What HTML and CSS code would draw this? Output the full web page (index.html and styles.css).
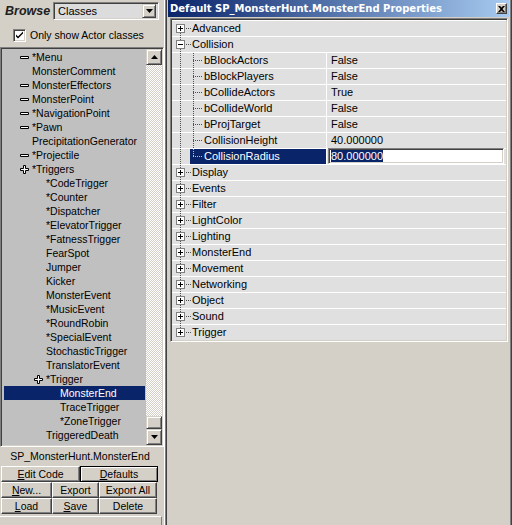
FILE: index.html
```html
<!DOCTYPE html>
<html>
<head>
<meta charset="utf-8">
<title>Actor Class Browser</title>
<link rel="stylesheet" href="styles.css">
</head>
<body>
<div class="app">
  <aside class="browser">
    <div class="browse-bar">
      <span class="browse-label">Browse</span>
      <div class="combo">
        <span class="combo-text">Classes</span>
        <span class="combo-btn"><svg width="7" height="4" viewBox="0 0 7 4"><path d="M0 0h7L3.5 4z" fill="#000"/></svg></span>
      </div>
    </div>
    <label class="check-row">
      <span class="checkbox"><svg width="9" height="9" viewBox="0 0 9 9"><path d="M1 3.5l2 2 5-5v2l-5 5-2-2z" fill="#000"/></svg></span>
      <span class="check-label">Only show Actor classes</span>
    </label>
    <div class="class-list">
      <ul class="tree">
        <li class="l0"><span class="tw minus"></span>*Menu</li>
        <li class="l0"><span class="tw"></span>MonsterComment</li>
        <li class="l0"><span class="tw minus"></span>MonsterEffectors</li>
        <li class="l0"><span class="tw minus"></span>MonsterPoint</li>
        <li class="l0"><span class="tw minus"></span>*NavigationPoint</li>
        <li class="l0"><span class="tw minus"></span>*Pawn</li>
        <li class="l0"><span class="tw"></span>PrecipitationGenerator</li>
        <li class="l0"><span class="tw minus"></span>*Projectile</li>
        <li class="l0"><span class="tw plus"></span>*Triggers</li>
        <li class="l1"><span class="tw"></span>*CodeTrigger</li>
        <li class="l1"><span class="tw"></span>*Counter</li>
        <li class="l1"><span class="tw"></span>*Dispatcher</li>
        <li class="l1"><span class="tw"></span>*ElevatorTrigger</li>
        <li class="l1"><span class="tw"></span>*FatnessTrigger</li>
        <li class="l1"><span class="tw"></span>FearSpot</li>
        <li class="l1"><span class="tw"></span>Jumper</li>
        <li class="l1"><span class="tw"></span>Kicker</li>
        <li class="l1"><span class="tw"></span>MonsterEvent</li>
        <li class="l1"><span class="tw"></span>*MusicEvent</li>
        <li class="l1"><span class="tw"></span>*RoundRobin</li>
        <li class="l1"><span class="tw"></span>*SpecialEvent</li>
        <li class="l1"><span class="tw"></span>StochasticTrigger</li>
        <li class="l1"><span class="tw"></span>TranslatorEvent</li>
        <li class="l1"><span class="tw plus"></span>*Trigger</li>
        <li class="l2 selected"><span class="tw"></span>MonsterEnd</li>
        <li class="l2"><span class="tw"></span>TraceTrigger</li>
        <li class="l2"><span class="tw"></span>*ZoneTrigger</li>
        <li class="l1"><span class="tw"></span>TriggeredDeath</li>
      </ul>
      <div class="vscroll">
        <span class="sb-btn"><svg width="7" height="4" viewBox="0 0 7 4"><path d="M3.5 0L7 4H0z" fill="#000"/></svg></span>
        <span class="sb-track"></span>
        <span class="sb-thumb"></span>
        <span class="sb-btn"><svg width="7" height="4" viewBox="0 0 7 4"><path d="M0 0h7L3.5 4z" fill="#000"/></svg></span>
      </div>
    </div>
    <div class="current-class">SP_MonsterHunt.MonsterEnd</div>
    <div class="btn-rows">
      <div class="btn-row two">
        <button class="btn"><u>E</u>dit Code</button>
        <button class="btn is-default"><u>D</u>efaults</button>
      </div>
      <div class="btn-row three">
        <button class="btn"><u>N</u>ew...</button>
        <button class="btn">Export</button>
        <button class="btn">Export All</button>
      </div>
      <div class="btn-row three">
        <button class="btn"><u>L</u>oad</button>
        <button class="btn"><u>S</u>ave</button>
        <button class="btn">Delete</button>
      </div>
    </div>
    <div class="status-well"></div>
  </aside>

  <section class="props-window">
    <header class="titlebar">
      <span class="title">Default SP_MonsterHunt.MonsterEnd Properties</span>
      <span class="close-btn"><svg width="7" height="6" viewBox="0 0 7 6"><path d="M0 0h2l1.5 1.5L5 0h2L4.5 3 7 6H5L3.5 4.5 2 6H0l2.5-3z" fill="#000"/></svg></span>
    </header>
    <div class="prop-grid">
      <div class="prop-row group">
        <span class="g0 line-down"><span class="exp plus"></span></span><span class="hl"></span><span class="label">Advanced</span>
      </div>
      <div class="prop-row group">
        <span class="g0 line-full"><span class="exp minus"></span></span><span class="hl"></span><span class="label">Collision</span>
      </div>
      <div class="prop-row item">
        <div class="prop-name"><span class="c0"></span><span class="name-body"><span class="c1"></span><span class="label">bBlockActors</span></span></div>
        <div class="prop-value">False</div>
      </div>
      <div class="prop-row item">
        <div class="prop-name"><span class="c0"></span><span class="name-body"><span class="c1"></span><span class="label">bBlockPlayers</span></span></div>
        <div class="prop-value">False</div>
      </div>
      <div class="prop-row item">
        <div class="prop-name"><span class="c0"></span><span class="name-body"><span class="c1"></span><span class="label">bCollideActors</span></span></div>
        <div class="prop-value">True</div>
      </div>
      <div class="prop-row item">
        <div class="prop-name"><span class="c0"></span><span class="name-body"><span class="c1"></span><span class="label">bCollideWorld</span></span></div>
        <div class="prop-value">False</div>
      </div>
      <div class="prop-row item">
        <div class="prop-name"><span class="c0"></span><span class="name-body"><span class="c1"></span><span class="label">bProjTarget</span></span></div>
        <div class="prop-value">False</div>
      </div>
      <div class="prop-row item">
        <div class="prop-name"><span class="c0"></span><span class="name-body"><span class="c1"></span><span class="label">CollisionHeight</span></span></div>
        <div class="prop-value">40.000000</div>
      </div>
      <div class="prop-row item selected">
        <div class="prop-name"><span class="c0"></span><span class="name-body"><span class="c1 last"></span><span class="label">CollisionRadius</span></span></div>
        <div class="prop-value"><span class="edit"><span class="edit-sel">80.000000</span></span></div>
      </div>
      <div class="prop-row group">
        <span class="g0 line-full"><span class="exp plus"></span></span><span class="hl"></span><span class="label">Display</span>
      </div>
      <div class="prop-row group">
        <span class="g0 line-full"><span class="exp plus"></span></span><span class="hl"></span><span class="label">Events</span>
      </div>
      <div class="prop-row group">
        <span class="g0 line-full"><span class="exp plus"></span></span><span class="hl"></span><span class="label">Filter</span>
      </div>
      <div class="prop-row group">
        <span class="g0 line-full"><span class="exp plus"></span></span><span class="hl"></span><span class="label">LightColor</span>
      </div>
      <div class="prop-row group">
        <span class="g0 line-full"><span class="exp plus"></span></span><span class="hl"></span><span class="label">Lighting</span>
      </div>
      <div class="prop-row group">
        <span class="g0 line-full"><span class="exp plus"></span></span><span class="hl"></span><span class="label">MonsterEnd</span>
      </div>
      <div class="prop-row group">
        <span class="g0 line-full"><span class="exp plus"></span></span><span class="hl"></span><span class="label">Movement</span>
      </div>
      <div class="prop-row group">
        <span class="g0 line-full"><span class="exp plus"></span></span><span class="hl"></span><span class="label">Networking</span>
      </div>
      <div class="prop-row group">
        <span class="g0 line-full"><span class="exp plus"></span></span><span class="hl"></span><span class="label">Object</span>
      </div>
      <div class="prop-row group">
        <span class="g0 line-full"><span class="exp plus"></span></span><span class="hl"></span><span class="label">Sound</span>
      </div>
      <div class="prop-row group">
        <span class="g0 line-up"><span class="exp plus"></span></span><span class="hl"></span><span class="label">Trigger</span>
      </div>
    </div>
  </section>
</div>
</body>
</html>
```

FILE: styles.css
```css
* { box-sizing: border-box; }

html, body {
  margin: 0;
  padding: 0;
}

body {
  width: 512px;
  height: 525px;
  overflow: hidden;
  background: #d4d0c8;
  font-family: "Liberation Sans", Arial, sans-serif;
  font-size: 11px;
  color: #000;
}

.app {
  display: flex;
  height: 525px;
}

/* ---------- class browser (left) ---------- */

.browser {
  width: 165px;
  flex: none;
  display: flex;
  flex-direction: column;
  font-size: 10.5px;
  border-right: 1px solid #fff;
}

.browse-bar {
  height: 20px;
  display: flex;
  align-items: flex-start;
  padding: 2px 0 0 5px;
}

.browse-label {
  width: 48px;
  font-size: 12.5px;
  font-weight: bold;
  font-style: italic;
  line-height: 18px;
  color: #202020;
}

.combo {
  width: 106px;
  height: 18px;
  display: flex;
  align-items: center;
  justify-content: space-between;
  background: #dcdcdc;
  border: 1px solid;
  border-color: #808080 #fff #fff #808080;
  box-shadow: inset 1px 1px #404040, inset -1px -1px #d4d0c8;
  padding: 1px 2px 1px 4px;
  font-size: 11px;
}

.combo-btn {
  width: 14px;
  height: 14px;
  display: flex;
  align-items: center;
  justify-content: center;
  background: #d4d0c8;
  border: 1px solid;
  border-color: #d4d0c8 #404040 #404040 #d4d0c8;
  box-shadow: inset 1px 1px #fff, inset -1px -1px #808080;
}

.check-row {
  height: 27px;
  display: flex;
  align-items: flex-start;
  gap: 4px;
  padding: 9px 0 0 13px;
}

.checkbox {
  width: 13px;
  height: 13px;
  display: flex;
  align-items: center;
  justify-content: center;
  background: #fff;
  border: 1px solid;
  border-color: #808080 #fff #fff #808080;
  box-shadow: inset 1px 1px #404040, inset -1px -1px #d4d0c8;
}

.check-label {
  line-height: 13px;
}

.class-list {
  width: 164px;
  height: 400px;
  display: flex;
  border: 1px solid;
  border-color: #808080 #fff #fff #808080;
  box-shadow: inset 1px 1px #404040, inset -1px -1px #d4d0c8;
  padding: 1px;
}

.tree {
  flex: 1;
  margin: 0;
  padding: 1px 1px 0 2px;
  list-style: none;
  background: #c0c0c0;
  overflow: hidden;
}

.tree li {
  height: 14px;
  line-height: 14px;
  display: flex;
  align-items: center;
  white-space: nowrap;
}

.tree .l0 { padding-left: 16px; }
.tree .l1 { padding-left: 30px; }
.tree .l2 { padding-left: 44px; }

.tree li.selected {
  background: #0a246a;
  color: #fff;
}

.tw {
  width: 9px;
  height: 9px;
  margin-right: 3px;
  flex: none;
  background-repeat: no-repeat;
}

.tw.minus {
  background-image: url("data:image/svg+xml,%3Csvg xmlns='http://www.w3.org/2000/svg' width='9' height='9'%3E%3Cpath d='M0.5 3.5h8v2h-8z' fill='%23fff' stroke='%23000'/%3E%3C/svg%3E");
}

.tw.plus {
  background-image: url("data:image/svg+xml,%3Csvg xmlns='http://www.w3.org/2000/svg' width='9' height='9'%3E%3Cpath d='M3.5 0.5h2v3h3v2h-3v3h-2v-3h-3v-2h3z' fill='%23fff' stroke='%23000'/%3E%3C/svg%3E");
}

.vscroll {
  width: 16px;
  flex: none;
  display: flex;
  flex-direction: column;
}

.sb-btn,
.sb-thumb {
  background: #d4d0c8;
  border: 1px solid;
  border-color: #d4d0c8 #404040 #404040 #d4d0c8;
  box-shadow: inset 1px 1px #fff, inset -1px -1px #808080;
}

.sb-btn {
  height: 16px;
  display: flex;
  align-items: center;
  justify-content: center;
}

.sb-track {
  flex: 1;
  background: repeating-conic-gradient(#fff 0 25%, #d4d0c8 0 50%) 0 0 / 2px 2px;
}

.sb-thumb {
  height: 13px;
}

.current-class {
  height: 19px;
  width: 160px;
  line-height: 19px;
  text-align: center;
  white-space: nowrap;
}

.btn-rows {
  display: flex;
  flex-direction: column;
  padding-left: 1px;
}

.btn-row {
  display: grid;
  height: 16px;
}

.btn-row.two { grid-template-columns: 79px 78px; }
.btn-row.three { grid-template-columns: 51px 47px 58px; }

.btn {
  height: 16px;
  padding: 0;
  margin: 0;
  font-family: inherit;
  font-size: 10.5px;
  line-height: 12px;
  color: #000;
  background: #d4d0c8;
  border: 1px solid;
  border-color: #fff #404040 #404040 #fff;
  box-shadow: inset -1px -1px #808080;
}

.btn.is-default {
  border-color: #000;
  box-shadow: inset 1px 1px #fff, inset -1px -1px #808080;
}

.status-well {
  margin-top: 2px;
  flex: 1;
  width: 162px;
  border-top: 1px solid #fff;
  border-right: 1px solid #808080;
}

/* ---------- properties window (right) ---------- */

.props-window {
  flex: 1;
  display: flex;
  flex-direction: column;
  border-left: 1px solid #808080;
  border-right: 1px solid #404040;
  box-shadow: inset 1px 0 #404040, inset -1px 0 #808080;
  padding: 0 2px 0 2px;
}

.titlebar {
  height: 17px;
  flex: none;
  display: flex;
  align-items: flex-start;
  justify-content: space-between;
  padding: 0 2px 0 2px;
  background: linear-gradient(to right, #0a246a, #a6caf0);
}

.title {
  font-family: "DejaVu Sans", Verdana, sans-serif;
  font-weight: bold;
  font-size: 10px;
  line-height: 17px;
  color: #fff;
  white-space: nowrap;
}

.close-btn {
  margin-top: 3px;
  width: 11px;
  height: 11px;
  display: flex;
  align-items: center;
  justify-content: center;
  background: #d4d0c8;
  border: 1px solid;
  border-color: #fff #404040 #404040 #fff;
  box-shadow: inset -1px -1px #808080;
}

.prop-grid {
  margin: 1px 1px 0 2px;
  height: 324px;
  background: #e0e0e0;
  border: 1px solid;
  border-color: #808080 #fff #fff #808080;
  box-shadow: inset 1px 1px #404040, inset -1px -1px #d4d0c8;
  padding: 1px;
  display: flex;
  flex-direction: column;
}

.prop-row {
  height: 16px;
  flex: none;
  display: flex;
  border-top: 1px solid #fff;
  white-space: nowrap;
}

.label {
  line-height: 15px;
}

/* dotted tree guides */
.g0,
.c0,
.c1,
.hl {
  flex: none;
  height: 15px;
  background-repeat: no-repeat;
}

.g0 {
  width: 14px;
  padding: 3px 0 0 4px;
  background-image: repeating-linear-gradient(to bottom, #505050 0 1px, transparent 1px 2px);
}

.g0.line-full { background-size: 1px 15px; background-position: 8px 0; }
.g0.line-down { background-size: 1px 7px; background-position: 8px 8px; }
.g0.line-up { background-size: 1px 8px; background-position: 8px 0; }

.hl {
  width: 6px;
  background-image: repeating-linear-gradient(to right, #505050 0 1px, transparent 1px 2px);
  background-size: 6px 1px;
  background-position: 0 7px;
}

.exp {
  display: block;
  width: 9px;
  height: 9px;
  background-repeat: no-repeat;
}

.exp.plus {
  background-image: url("data:image/svg+xml,%3Csvg xmlns='http://www.w3.org/2000/svg' width='9' height='9'%3E%3Crect x='0.5' y='0.5' width='8' height='8' fill='%23fff' stroke='%23808080'/%3E%3Cpath d='M2 4.5h5M4.5 2v5' stroke='%23000'/%3E%3C/svg%3E");
}

.exp.minus {
  background-image: url("data:image/svg+xml,%3Csvg xmlns='http://www.w3.org/2000/svg' width='9' height='9'%3E%3Crect x='0.5' y='0.5' width='8' height='8' fill='%23fff' stroke='%23808080'/%3E%3Cpath d='M2 4.5h5' stroke='%23000'/%3E%3C/svg%3E");
}

.prop-name {
  width: 155px;
  flex: none;
  display: flex;
  border-right: 1px solid #fff;
}

.c0 {
  width: 18px;
  background-image: repeating-linear-gradient(to bottom, #505050 0 1px, transparent 1px 2px);
  background-size: 1px 15px;
  background-position: 8px 0;
}

.name-body {
  flex: 1;
  display: flex;
}

.c1 {
  width: 14px;
  background-image:
    repeating-linear-gradient(to bottom, #505050 0 1px, transparent 1px 2px),
    repeating-linear-gradient(to right, #505050 0 1px, transparent 1px 2px);
  background-size: 1px 15px, 10px 1px;
  background-position: 3px 0, 3px 7px;
}

.c1.last {
  background-size: 1px 8px, 10px 1px;
}

.prop-row.selected .name-body {
  background-color: #0a246a;
  color: #fff;
}

.prop-row.selected .c1 {
  background-image:
    repeating-linear-gradient(to bottom, #c0c0c0 0 1px, transparent 1px 2px),
    repeating-linear-gradient(to right, #c0c0c0 0 1px, transparent 1px 2px);
}

.prop-value {
  flex: 1;
  padding-left: 4px;
  line-height: 15px;
}

.prop-row.selected .prop-value {
  padding: 0 2px 0 1px;
}

.edit {
  display: flex;
  align-items: center;
  height: 16px;
  margin-top: -1px;
  background: #fff;
  border: 1px solid;
  border-color: #808080 #fff #fff #808080;
  box-shadow: inset 1px 1px #404040, inset -1px -1px #d4d0c8;
  padding: 0 0 0 2px;
}

.edit-sel {
  background: #0a246a;
  color: #fff;
  line-height: 12px;
}
```
